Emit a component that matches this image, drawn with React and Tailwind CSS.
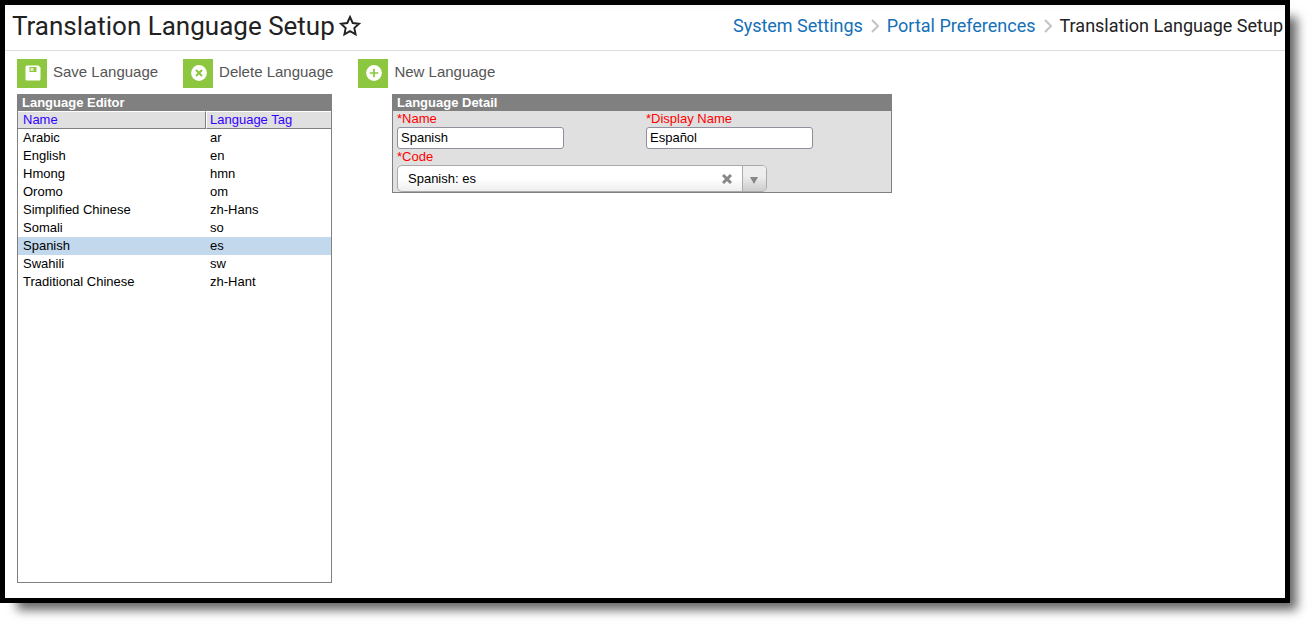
import React, { useState } from 'react';
import { clsx } from 'clsx';

const LANGUAGES = [
    { name: 'Arabic', tag: 'ar' },
    { name: 'English', tag: 'en' },
    { name: 'Hmong', tag: 'hmn' },
    { name: 'Oromo', tag: 'om' },
    { name: 'Simplified Chinese', tag: 'zh-Hans' },
    { name: 'Somali', tag: 'so' },
    { name: 'Spanish', tag: 'es', displayName: 'Español' },
    { name: 'Swahili', tag: 'sw' },
    { name: 'Traditional Chinese', tag: 'zh-Hant' },
];

const EMPTY = { name: '', displayName: '', code: '' };

const toForm = (lang) => ({
    name: lang.name,
    displayName: lang.displayName || lang.name,
    code: lang.tag,
});

const SaveIcon = () => (
    <svg viewBox="0 0 16 16" className="size-4" aria-hidden="true">
        <path d="M2 .5h11.500l2 2V14a1.500 1.500 0 0 1-1.500 1.500H2A1.500 1.500 0 0 1 .5 14V2A1.500 1.500 0 0 1 2 .5z" fill="#fff" />
        <path d="M4.500 2h7v5h-7z" fill="#8dc63f" />
        <path d="M5.500 3h3v3h-3z" fill="#dcefc4" />
    </svg>
);

const DeleteIcon = () => (
    <svg viewBox="0 0 16 16" className="size-4" aria-hidden="true">
        <circle cx="8" cy="8" r="7.900" fill="#fff" />
        <path d="M5 5l6 6M11 5l-6 6" stroke="#8dc63f" strokeWidth="2" />
    </svg>
);

const AddIcon = () => (
    <svg viewBox="0 0 16 16" className="size-4" aria-hidden="true">
        <circle cx="8" cy="8" r="7.900" fill="#fff" />
        <path d="M8 3.700v8.600M3.700 8h8.600" stroke="#8dc63f" strokeWidth="1.700" />
    </svg>
);

const Chevron = () => (
    <svg viewBox="0 0 8 14" className="h-[14px] w-2 shrink-0" fill="none" stroke="#c4c4c4" strokeWidth="2" aria-hidden="true">
        <path d="M1 1l6 6-6 6" />
    </svg>
);

const ToolbarButton = ({ icon, children, onClick }) => (
    <button type="button" onClick={onClick} className="flex items-center gap-[6px] text-[15px] leading-[18px] text-[#555]">
        <span className="flex h-[29px] w-[30px] items-center justify-center bg-[#8dc63f] pb-px pl-px">{icon}</span>
        <span className="pb-[3px]">{children}</span>
    </button>
);

const TextField = ({ id, label, value, onChange }) => (
    <div className="flex flex-col items-start">
        <label htmlFor={id} className="leading-4 text-[#f00]">*{label}</label>
        <input
            id={id}
            type="text"
            value={value}
            onChange={(e) => onChange(e.target.value)}
            className="h-[22px] w-[167px] rounded-[3px] border border-[#8f8f9d] bg-white px-[3px] pb-[2px] text-black"
        />
    </div>
);

const App = () => {
    const [form, setForm] = useState(toForm(LANGUAGES[6]));
    const [selected, setSelected] = useState('es');
    const [starred, setStarred] = useState(false);

    const update = (key) => (value) => setForm({ ...form, [key]: value });

    const clear = () => {
        setSelected(null);
        setForm(EMPTY);
    };

    return (
        <div className="flex min-h-screen bg-white pr-[25px] pb-[25px] font-['Liberation_Sans',Arial,sans-serif] text-[13px]">
            <div className="flex min-w-0 flex-1 flex-col border-[5px] border-black bg-white shadow-[12px_12px_10px_-5px_rgba(0,0,0,0.6)]">
                {/* Page header */}
                <header className="flex h-[46px] items-center justify-between border-b border-[#ddd] bg-linear-to-b from-[#f7f7f7] to-white to-15% pr-[2px] pb-1 pl-[7px] font-['Roboto',sans-serif] whitespace-nowrap text-[#222]">
                    <div className="flex items-center gap-1">
                        <h1 className="text-[26px] leading-[34px]">Translation Language Setup</h1>
                        <button type="button" aria-label="Favorite" aria-pressed={starred} onClick={() => setStarred(!starred)}>
                            <svg viewBox="0 0 22 22" className="size-[22px]" fill={starred ? '#222' : 'none'} stroke="#222" strokeWidth="1.900">
                                <path d="M11 2l2.700 6 6.300.7-4.700 4.300 1.300 6.400L11 16.200l-5.600 3.200 1.300-6.400L2 8.700 8.300 8z" />
                            </svg>
                        </button>
                    </div>
                    <nav aria-label="Breadcrumb" className="flex items-center gap-2 text-[18px] leading-6">
                        <a href="#system-settings" className="text-[#1470b8]">System Settings</a>
                        <Chevron />
                        <a href="#portal-preferences" className="text-[#1470b8]">Portal Preferences</a>
                        <Chevron />
                        <span aria-current="page">Translation Language Setup</span>
                    </nav>
                </header>

                <main className="flex flex-1 flex-col px-3 pt-2 pb-[15px]">
                    {/* Toolbar */}
                    <div className="mb-[6px] flex gap-[25px]">
                        <ToolbarButton icon={<SaveIcon />}>Save Language</ToolbarButton>
                        <ToolbarButton icon={<DeleteIcon />}>Delete Language</ToolbarButton>
                        <ToolbarButton icon={<AddIcon />} onClick={clear}>New Language</ToolbarButton>
                    </div>

                    <div className="flex flex-1 gap-[60px]">
                        {/* Language list */}
                        <section className="w-[315px] shrink-0 border border-[#808080]">
                            <h2 className="h-4 bg-[#808080] pl-1 leading-4 font-bold text-white">Language Editor</h2>
                            <table className="w-full table-fixed border-separate border-spacing-0 text-left text-black">
                                <thead>
                                    <tr className="bg-[#e0e0e0] text-[#30f]">
                                        <th className="h-[18px] w-[188px] border-t border-r border-b border-t-white border-r-[#808080] border-b-[#808080] pl-[5px] leading-4 font-normal">Name</th>
                                        <th className="h-[18px] border-t border-b border-l border-t-white border-b-[#808080] border-l-white pl-[3px] leading-4 font-normal">Language Tag</th>
                                    </tr>
                                </thead>
                                <tbody>
                                    {LANGUAGES.map((lang) => (
                                        <tr
                                            key={lang.tag}
                                            onClick={() => {
                                                setSelected(lang.tag);
                                                setForm(toForm(lang));
                                            }}
                                            className={clsx('cursor-pointer leading-[18px]', selected === lang.tag && 'bg-[#c2d9ed]')}
                                        >
                                            <td className="pl-[5px]">{lang.name}</td>
                                            <td className="pl-1">{lang.tag}</td>
                                        </tr>
                                    ))}
                                </tbody>
                            </table>
                        </section>

                        {/* Language form */}
                        <section className="w-[500px] self-start border border-[#808080] bg-[#e0e0e0]">
                            <h2 className="h-4 bg-[#808080] pl-1 leading-4 font-bold text-white">Language Detail</h2>
                            <form className="pl-1" onSubmit={(e) => e.preventDefault()}>
                                <div className="grid grid-cols-[249px_1fr]">
                                    <TextField id="name" label="Name" value={form.name} onChange={update('name')} />
                                    <TextField id="displayName" label="Display Name" value={form.displayName} onChange={update('displayName')} />
                                </div>
                                <label htmlFor="code" className="block leading-4 text-[#f00]">*Code</label>
                                <div className="flex h-[27px] w-[370px] overflow-hidden rounded-[5px] border border-[#aaa] bg-linear-to-b from-white from-50% to-[#eee]">
                                    <select
                                        id="code"
                                        value={form.code}
                                        onChange={(e) => update('code')(e.target.value)}
                                        className="min-w-0 flex-1 appearance-none bg-transparent pl-[10px] text-black"
                                    >
                                        <option value="" />
                                        {LANGUAGES.map((lang) => (
                                            <option key={lang.tag} value={lang.tag}>{lang.name}: {lang.tag}</option>
                                        ))}
                                    </select>
                                    <button type="button" aria-label="Clear code" onClick={() => update('code')('')} className="flex w-[30px] items-center justify-center pt-px">
                                        <svg viewBox="0 0 10 10" className="size-[10px]" stroke="#888" strokeWidth="3" aria-hidden="true">
                                            <path d="M1 1l8 8M9 1L1 9" />
                                        </svg>
                                    </button>
                                    <button type="button" aria-label="Show codes" className="flex w-6 items-center justify-center border-l border-[#aaa] bg-linear-to-t from-[#ccc] to-[#eee] to-60% pt-[3px] pr-[2px]">
                                        <svg viewBox="0 0 8 7" className="h-[7px] w-2" fill="#888" aria-hidden="true">
                                            <path d="M0 0h8L4 7z" />
                                        </svg>
                                    </button>
                                </div>
                            </form>
                        </section>
                    </div>
                </main>
            </div>
        </div>
    );
};

export default App;
